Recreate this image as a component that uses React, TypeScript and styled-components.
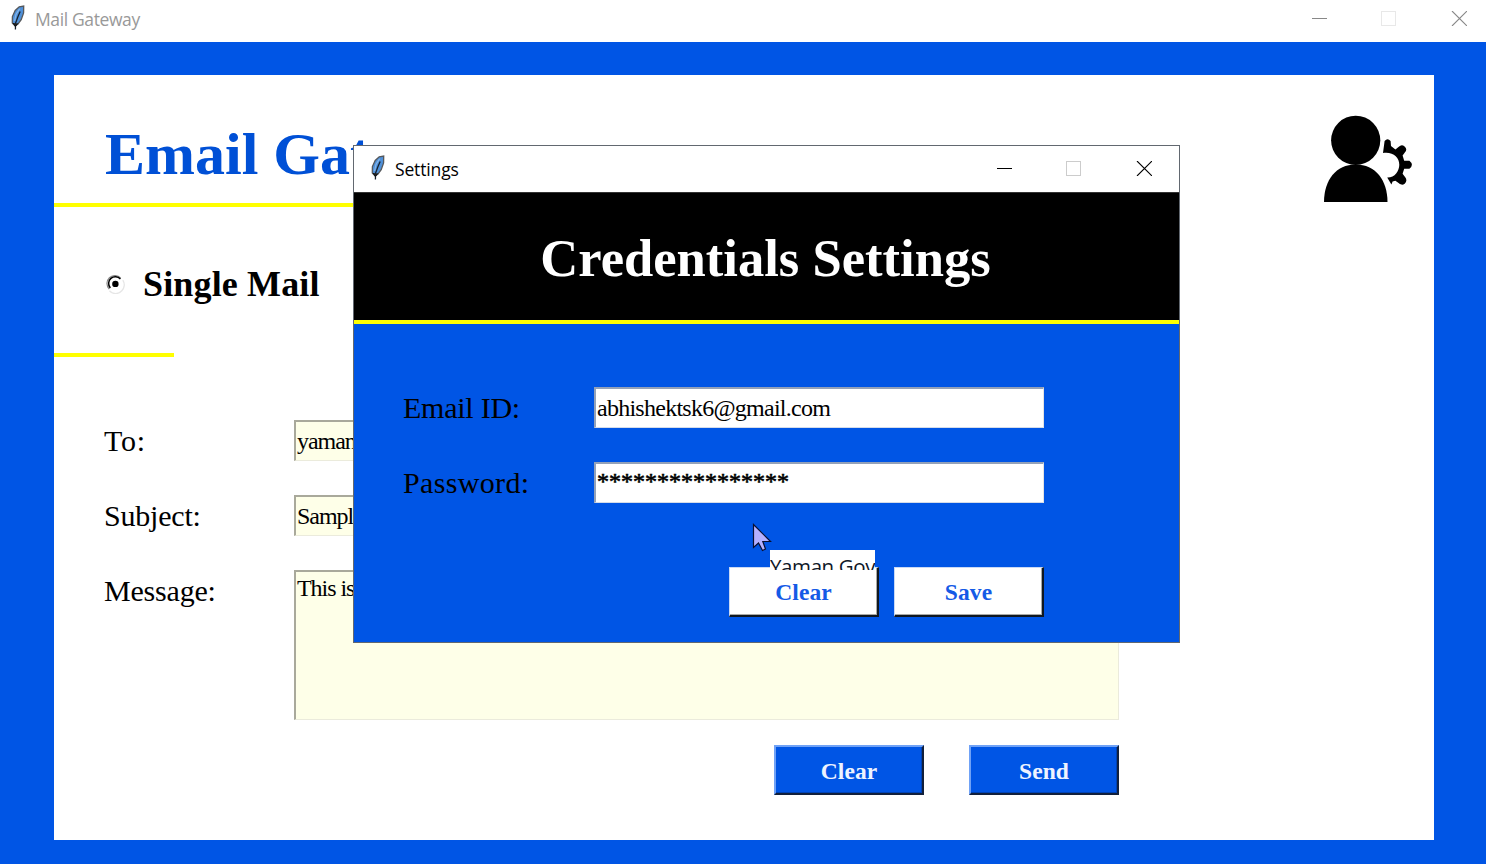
import React from 'react';
import styled, { createGlobalStyle, css } from 'styled-components';

const BLUE = '#0055e5';
const CREAM = '#feffe8';
const serif = `'Liberation Serif', 'Times New Roman', serif`;
const sans = `'Open Sans', 'Noto Sans', sans-serif`;

const GlobalStyle = createGlobalStyle`
  html, body { margin: 0; padding: 0; }
  body { width: 1486px; height: 864px; overflow: hidden; background: ${BLUE}; }
  * { box-sizing: border-box; }
`;

const MainWindow = styled.div`
  position: relative;
  display: flex;
  flex-direction: column;
  width: 1486px;
  height: 864px;
  overflow: hidden;
  background: ${BLUE};
  font-family: ${serif};
  color: #000;
`;

const TitleBar = styled.header<{ $inactive?: boolean }>`
  display: flex;
  flex: none;
  align-items: center;
  height: ${(p) => (p.$inactive ? 42 : 47)}px;
  padding: ${(p) => (p.$inactive ? '0 19px 6px 10px' : '0 27px 2px 16px')};
  background: #fff;
  color: ${(p) => (p.$inactive ? '#999' : '#000')};
  font-family: ${sans};
  border-bottom: ${(p) => (p.$inactive ? 'none' : '1px solid #333')};
`;

const TitleText = styled.span<{ $inactive?: boolean }>`
  flex: 1;
  margin-left: 9px;
  font-size: 17.5px;
  line-height: 24px;
  letter-spacing: ${(p) => (p.$inactive ? -0.38 : -0.15)}px;
  padding-top: 1px;
`;

const Controls = styled.div`
  display: flex;
  align-items: center;
  gap: 54px;
`;

const Panel = styled.main`
  display: flex;
  flex-direction: column;
  width: 1380px;
  height: 765px;
  margin: 33px 0 0 54px;
  background: #fff;
`;

const PanelHeader = styled.div`
  display: flex;
  justify-content: space-between;
  height: 128px;
  padding: 40px 20px 0 51px;
`;

const Heading = styled.h1`
  margin: 4px 0 0;
  font-size: 60px;
  line-height: 70px;
  font-weight: bold;
  color: #0050d6;
`;

const Rule = styled.div<{ $width: number }>`
  width: ${(p) => p.$width}px;
  height: 4px;
  background: #ff0;
`;

const ModeRow = styled.div`
  display: flex;
  align-items: center;
  height: 146px;
  padding: 8px 0 0 52px;
  gap: 18px;
`;

const ModeLabel = styled.span`
  font-size: 36px;
  font-weight: bold;
  letter-spacing: 0.15px;
`;

const Form = styled.form`
  display: grid;
  grid-template-columns: 190px 825px;
  grid-template-rows: 41px 41px 150px;
  row-gap: 34px;
  margin: 63px 0 0 50px;
`;

const Label = styled.label<{ $spacing?: number }>`
  font-size: 30px;
  line-height: 42px;
  letter-spacing: ${(p) => p.$spacing ?? 0}px;
`;

const Field = styled.div<{ $cream?: boolean; $tall?: boolean; $masked?: boolean }>`
  overflow: hidden;
  white-space: nowrap;
  font-size: 24px;
  line-height: ${(p) => (p.$tall ? 30 : p.$masked ? 34 : 38)}px;
  letter-spacing: ${(p) => (p.$masked ? 0 : p.$cream ? -1.05 : -0.74)}px;
  -webkit-text-stroke: ${(p) => (p.$masked ? 0.6 : 0)}px #000;
  padding-left: 1px;
  padding-top: ${(p) => (p.$tall ? 1 : 0)}px;
  background: ${(p) => (p.$cream ? CREAM : '#fff')};
  border: 1px solid;
  border-width: 2px 1px 1px 2px;
  border-color: ${(p) =>
    p.$cream ? '#a9a99b #ebebdc #ebebdc #a9a99b' : '#93a1b8 #e3e3e3 #d4dcea #93a1b8'};
`;

const Actions = styled.div<{ $gap: number }>`
  display: flex;
  justify-content: flex-end;
  gap: ${(p) => p.$gap}px;
`;

const MainActions = styled(Actions)`
  width: 1065px;
  margin-top: 25px;
`;

const Button = styled.button<{ $primary?: boolean }>`
  width: 150px;
  height: 50px;
  padding: 1px 0 0;
  font: bold 23.5px/44px ${serif};
  letter-spacing: 0.1px;
  ${(p) =>
    p.$primary
      ? css`
          color: #eef3ff;
          background: ${BLUE};
          border: 2px solid;
          border-color: #70a2f6 #12203c #12203c #70a2f6;
          box-shadow: inset -1px -1px 0 #0042b4;
        `
      : css`
          color: #145ae6;
          background: #fff;
          border: 2px solid;
          border-width: 1px 2px 2px 1px;
          border-color: #c9d9f5 #101820 #101820 #c9d9f5;
          box-shadow: inset -1px -1px 0 #a9a9a5;
        `}
`;

const Dialog = styled.section`
  position: absolute;
  left: 353px;
  top: 145px;
  display: flex;
  flex-direction: column;
  width: 827px;
  height: 498px;
  border: 1px solid #626870;
  background: ${BLUE};
`;

const Banner = styled.div`
  display: flex;
  align-items: center;
  justify-content: center;
  height: 127px;
  padding: 2px 2px 0 0;
  background: #000;
  color: #fff;
`;

const BannerTitle = styled.h2`
  margin: 0;
  font-size: 52.6px;
  line-height: 60px;
  font-weight: bold;
`;

const CredentialForm = styled.div`
  display: grid;
  grid-template-columns: 191px 450px;
  grid-template-rows: 41px 41px;
  row-gap: 34px;
  margin: 63px 0 64px 49px;
`;

const DialogActions = styled(Actions)`
  width: 690px;
`;

const Tooltip = styled.div`
  position: absolute;
  left: 770px;
  top: 550px;
  width: 105px;
  height: 20px;
  overflow: hidden;
  background: #fff;
  color: #101828;
  font: 20.5px/30px ${sans};
  letter-spacing: -0.4px;
  white-space: nowrap;
  padding-top: 1px;
`;

const Pointer = styled.svg`
  position: absolute;
  left: 752px;
  top: 523px;
`;

function Feather() {
  return (
    <svg width="16" height="26" viewBox="0 0 16 26">
      <path d="M5.2 21 L2.3 18 L2.4 11.6 L5.2 5.4 L9.2 1.8 L13.7 1 L13.6 8 L11.2 14.6 L8 19 Z" fill="#4f90d8" stroke="#55585c" strokeWidth="1.3" />
      <path d="M9.6 3.8 L6 9.4 L4.6 16" fill="none" stroke="#86b6ea" strokeWidth="1.2" />
      <path d="M10.2 6.5 L7.8 12 L5.6 18 L5.4 24.6" fill="none" stroke="#16202c" strokeWidth="1.3" />
      <path d="M3 18 L5.4 21.4 L7.8 18.4" fill="#222" stroke="#111" strokeWidth="1" />
    </svg>
  );
}

function WindowControls({ inactive }: { inactive?: boolean }) {
  const ink = inactive ? '#888' : '#000';
  const off = inactive ? '#e8e8e8' : '#ccc';
  return (
    <Controls>
      <svg width="15" height="15">
        <rect y="7" width="15" height="1" fill={ink} />
      </svg>
      <svg width="15" height="15">
        <rect x=".5" y=".5" width="14" height="14" fill="none" stroke={off} />
      </svg>
      <svg width="17" height="15" viewBox="-2 0 17 15">
        <path d="M0 0 L15 15 M15 0 L0 15" stroke={ink} strokeWidth="1.1" />
      </svg>
    </Controls>
  );
}

function UserSettings() {
  return (
    <svg width="92" height="88" viewBox="0 0 92 88">
      <circle cx="33.7" cy="25.3" r="24.6" />
      <path d="M2 87 C2 65 14 49.4 33.7 49.4 C53.5 49.4 65.5 65 65.5 87 Z" />
      <path d="M61 38 L62.6 26 Q65.5 22.6 68.6 26 L69 31 L73.4 34.4 L76.8 31.8 A4.1 4.1 0 1 1 83 37.2 L80.6 40.6 L82.2 45.7 L87.4 45.7 Q92.4 49.7 87.4 53.7 L82.2 53.7 L80.6 58.8 L83.4 62.6 A4.1 4.1 0 1 1 76.6 68 L73.4 65.8 L70.6 66.4 L69.4 69.5 L65.2 62.5 C72.7 62.8 77.3 56 77.3 49.7 C77.3 42 71 36.6 61 38 Z" />
    </svg>
  );
}

function Radio() {
  return (
    <svg width="19" height="19" viewBox="0 0 19 19">
      <path d="M15.8 15.8 A8.3 8.3 0 0 0 16.8 5.2 M3.4 15.8 A8.3 8.3 0 0 0 15.8 15.8" fill="none" stroke="#e6e6e6" strokeWidth="1.3" />
      <path d="M3.2 14 A7.8 7.8 0 0 1 14.6 3" fill="none" stroke="#888" strokeWidth="1.2" />
      <path d="M4.3 12.9 A6.5 6.5 0 0 1 14.4 4" fill="none" stroke="#000" strokeWidth="1.5" />
      <circle cx="9.4" cy="8.9" r="3.2" />
    </svg>
  );
}

export default function App() {
  return (
    <>
      <GlobalStyle />
      <MainWindow>
        <TitleBar $inactive>
          <Feather />
          <TitleText $inactive>Mail Gateway</TitleText>
          <WindowControls inactive />
        </TitleBar>

        <Panel>
          <PanelHeader>
            <Heading>Email Gat</Heading>
            <UserSettings />
          </PanelHeader>
          <Rule $width={900} />
          <ModeRow>
            <Radio />
            <ModeLabel>Single Mail</ModeLabel>
          </ModeRow>
          <Rule $width={120} />
          <Form>
            <Label $spacing={0.8}>To:</Label>
            <Field $cream>yaman</Field>
            <Label $spacing={-0.2}>Subject:</Label>
            <Field $cream>Sampl</Field>
            <Label $spacing={-0.2}>Message:</Label>
            <Field $cream $tall>This is</Field>
          </Form>
          <MainActions $gap={45}>
            <Button $primary>Clear</Button>
            <Button $primary>Send</Button>
          </MainActions>
        </Panel>

        <Dialog>
          <TitleBar>
            <Feather />
            <TitleText>Settings</TitleText>
            <WindowControls />
          </TitleBar>
          <Banner>
            <BannerTitle>Credentials Settings</BannerTitle>
          </Banner>
          <Rule $width={825} />
          <CredentialForm>
            <Label $spacing={-0.25}>Email ID:</Label>
            <Field>abhishektsk6@gmail.com</Field>
            <Label $spacing={0.35}>Password:</Label>
            <Field $masked>****************</Field>
          </CredentialForm>
          <DialogActions $gap={15}>
            <Button>Clear</Button>
            <Button>Save</Button>
          </DialogActions>
        </Dialog>

        <Tooltip>Yaman Gov</Tooltip>
        <Pointer width="20" height="30" viewBox="0 0 20 30">
          <path d="M1.5 1.5 V24.5 L6.5 20 L10.5 27.5 L13.5 26 L10.8 18.5 H18.5 Z" fill="#b4b0ff" stroke="#0a1030" strokeWidth="1.2" />
        </Pointer>
      </MainWindow>
    </>
  );
}
